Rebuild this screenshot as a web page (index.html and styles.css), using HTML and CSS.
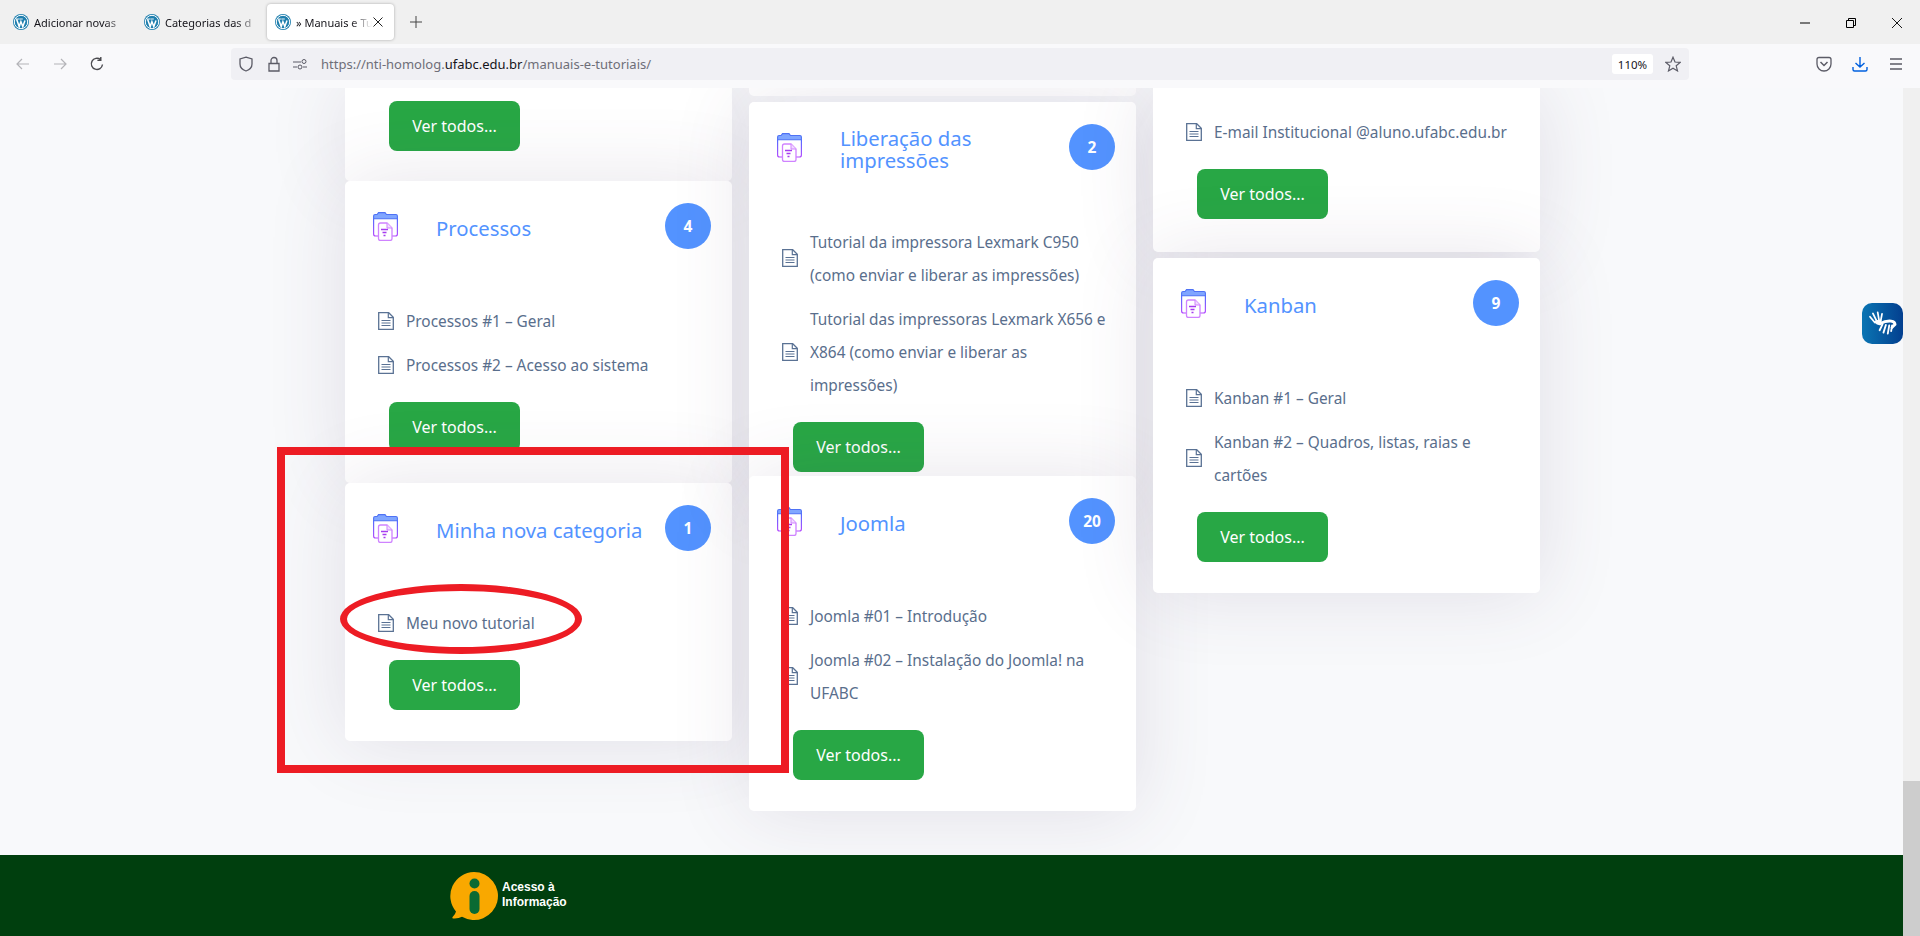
FILE: index.html
```html
<!DOCTYPE html>
<html lang="pt-BR">
<head>
<meta charset="utf-8">
<title>Manuais e Tutoriais</title>
<link rel="stylesheet" href="styles.css">
</head>
<body>
<svg class="defs" width="0" height="0" aria-hidden="true">
  <defs>
    <linearGradient id="fg" x1="0" y1="0" x2="0" y2="1">
      <stop offset="0" stop-color="#4f6dff"/>
      <stop offset="1" stop-color="#b44cff"/>
    </linearGradient>
    <symbol id="wp" viewBox="0 0 16 16">
      <circle cx="8" cy="8" r="8" fill="#1f7fae"/>
      <circle cx="8" cy="8" r="6.7" fill="none" stroke="#fff" stroke-width="1"/>
      <path d="M3.6 5.2 6.2 12.6 7.9 7.6 9.800 12.600 12 6.400" fill="none" stroke="#fff" stroke-width="1.500"/>
      <path d="M3 5h3.400M6.600 5h3.200" stroke="#fff" stroke-width=".9"/>
    </symbol>
    <symbol id="folder" viewBox="0 0 25 29">
      <path d="M.6 6.800V4q0-1.500 1.500-1.500h2L5.500.6h6.500l1.500 1.900h9.400q1.500 0 1.500 1.500v2.800z" fill="#80a6ff" stroke="#4f72f5" stroke-width="1.100"/>
      <path d="M.6 6.500v15.500q0 2 2 2h19.800q2 0 2-2V6.500" fill="none" stroke="url(#fg)" stroke-width="1.200"/>
      <path d="M5.500 13q0-2 2-2h6.500l5 5v10.500q0 2-2 2h-9.500q-2 0-2-2z" fill="#fff" stroke="#cf83ff" stroke-width="1.300"/>
      <path d="M14 11v5h5" fill="#f2dcff" stroke="#cf83ff"/>
      <path d="M8 17.500h7M9.500 20.500h4M10.500 23.500h2" stroke="#a63cf0" stroke-width="1.300"/>
    </symbol>
    <symbol id="doc" viewBox="0 0 16 18">
      <path d="M.7.700h10l4.600 4.600v12h-14.600z" fill="#fff" stroke="#5a7294" stroke-width="1.300"/>
      <path d="M10.300.700v5h5" fill="none" stroke="#5a7294" stroke-width="1.200"/>
      <path d="M3.500 8.500h9M3.500 11h9M3.500 13.500h9" stroke="#5a7294" stroke-width="1.200"/>
    </symbol>
  </defs>
</svg>

<div class="app">
  <header class="tabstrip">
    <div class="tab">
      <svg class="wp"><use href="#wp"/></svg>
      <span class="tab-label">Adicionar novas</span>
    </div>
    <div class="tab">
      <svg class="wp"><use href="#wp"/></svg>
      <span class="tab-label">Categorias das d</span>
    </div>
    <div class="tab tab-active">
      <svg class="wp"><use href="#wp"/></svg>
      <span class="tab-label">» Manuais e Tu</span>
      <svg class="tab-close" viewBox="0 0 10 10"><path d="M.5.500l9 9M9.500.500l-9 9" stroke="#222" fill="none"/></svg>
    </div>
    <svg class="tab-new" viewBox="0 0 12 12"><path d="M6 0v12M0 6h12" stroke="#444" stroke-width="1" fill="none"/></svg>
    <div class="winctl">
      <svg class="winbtn" viewBox="0 0 10 10"><path d="M0 5h10" stroke="#000" fill="none"/></svg>
      <svg class="winbtn" viewBox="0 0 10 10"><path d="M.5 2.500h7v7h-7zM2.500 2.500v-2h7v7h-2" stroke="#000" fill="none"/></svg>
      <svg class="winbtn" viewBox="0 0 10 10"><path d="M0 0l10 10M10 0l-10 10" stroke="#000" fill="none" stroke-width=".9"/></svg>
    </div>
  </header>

  <nav class="toolbar">
    <svg class="navbtn" viewBox="0 0 16 16"><path d="M14 8H2M7 3 2 8l5 5" stroke="#b4b4b8" stroke-width="1.200" fill="none"/></svg>
    <svg class="navbtn" viewBox="0 0 16 16"><path d="M2 8h12M9 3l5 5-5 5" stroke="#b4b4b8" stroke-width="1.200" fill="none"/></svg>
    <svg class="navbtn" viewBox="0 0 16 16"><path d="M13.500 8.500A5.600 5.600 0 1 1 11.500 3.500M11.800 1v3.400H8.400" stroke="#4a4a4f" stroke-width="1.400" fill="none"/></svg>
    <div class="urlbar">
      <svg class="urlicon" viewBox="0 0 16 16"><path d="M8 1.200 14 3v5c0 3.500-3 6-6 7-3-1-6-3.500-6-7V3z" stroke="#5b5b66" stroke-width="1.300" fill="none"/></svg>
      <svg class="urlicon" viewBox="0 0 16 16"><path d="M3 7.500h10V15H3zM5 7.500V4.500a3 3 0 0 1 6 0v3" stroke="#5b5b66" stroke-width="1.300" fill="none"/></svg>
      <svg class="urlicon" viewBox="0 0 16 16"><path d="M1 6h8M1 11h4M11 11h4" stroke="#5b5b66" stroke-width="1.200" fill="none"/><circle cx="12" cy="5.500" r="2" stroke="#5b5b66" fill="none"/><circle cx="8" cy="11" r="2" stroke="#5b5b66" fill="none"/></svg>
      <span class="url">https://nti-homolog.<b class="url-host">ufabc.edu.br</b>/manuais-e-tutoriais/</span>
      <span class="zoom-pill">110%</span>
      <svg class="star" viewBox="0 0 16 16"><path d="M8 1.200 10 6l5.200.4-4 3.400 1.300 5.100L8 12.200 3.500 14.900l1.300-5.100-4-3.400L6 6z" stroke="#5b5b66" stroke-width="1.200" fill="none"/></svg>
    </div>
    <div class="tools">
      <svg class="tool" viewBox="0 0 16 16"><path d="M1 3.500q0-2 2-2h10q2 0 2 2V8a7 7 0 0 1-14 0z" stroke="#5b5b66" stroke-width="1.300" fill="none"/><path d="M4.500 6 8 9.500 11.500 6" stroke="#5b5b66" stroke-width="1.500" fill="none"/></svg>
      <svg class="tool" viewBox="0 0 16 16"><path d="M8 1v10M3.500 7 8 11l4.500-4M1 11v2.500q0 1.500 1.500 1.500h11q1.500 0 1.500-1.500V11" stroke="#0060df" stroke-width="1.400" fill="none"/></svg>
      <svg class="tool" viewBox="0 0 16 16"><path d="M2 3h12M2 8h12M2 13h12" stroke="#5b5b66" stroke-width="1.300" fill="none"/></svg>
    </div>
  </nav>

  <div class="viewport">
    <main class="page">
      <div class="columns">
        <section class="col">
          <article class="card card-cut-a">
            <a class="btn">Ver todos...</a>
          </article>
          <article class="card">
            <div class="card-head">
              <svg class="folder"><use href="#folder"/></svg>
              <h2 class="card-title">Processos</h2>
              <span class="badge">4</span>
            </div>
            <ul class="list">
              <li class="item"><svg class="doc"><use href="#doc"/></svg><span>Processos #1 – Geral</span></li>
              <li class="item"><svg class="doc"><use href="#doc"/></svg><span>Processos #2 – Acesso ao sistema</span></li>
            </ul>
            <a class="btn">Ver todos...</a>
          </article>
          <article class="card">
            <div class="card-head">
              <svg class="folder"><use href="#folder"/></svg>
              <h2 class="card-title">Minha nova categoria</h2>
              <span class="badge">1</span>
            </div>
            <ul class="list">
              <li class="item"><svg class="doc"><use href="#doc"/></svg><span>Meu novo tutorial</span></li>
            </ul>
            <a class="btn">Ver todos...</a>
          </article>
        </section>

        <section class="col">
          <article class="card card-cut-b"></article>
          <article class="card card-under">
            <div class="card-head">
              <svg class="folder"><use href="#folder"/></svg>
              <h2 class="card-title">Liberação das impressões</h2>
              <span class="badge">2</span>
            </div>
            <ul class="list">
              <li class="item"><svg class="doc"><use href="#doc"/></svg><span>Tutorial da impressora Lexmark C950 (como enviar e liberar as impressões)</span></li>
              <li class="item"><svg class="doc"><use href="#doc"/></svg><span>Tutorial das impressoras Lexmark X656 e X864 (como enviar e liberar as impressões)</span></li>
            </ul>
            <a class="btn">Ver todos...</a>
          </article>
          <article class="card">
            <div class="card-head">
              <svg class="folder"><use href="#folder"/></svg>
              <h2 class="card-title">Joomla</h2>
              <span class="badge">20</span>
            </div>
            <ul class="list">
              <li class="item"><svg class="doc"><use href="#doc"/></svg><span>Joomla #01 – Introdução</span></li>
              <li class="item"><svg class="doc"><use href="#doc"/></svg><span>Joomla #02 – Instalação do Joomla! na UFABC</span></li>
            </ul>
            <a class="btn">Ver todos...</a>
          </article>
        </section>

        <section class="col">
          <article class="card card-cut-c">
            <ul class="list list-flush">
              <li class="item"><svg class="doc"><use href="#doc"/></svg><span>E-mail Institucional @aluno.ufabc.edu.br</span></li>
            </ul>
            <a class="btn">Ver todos...</a>
          </article>
          <article class="card">
            <div class="card-head">
              <svg class="folder"><use href="#folder"/></svg>
              <h2 class="card-title">Kanban</h2>
              <span class="badge">9</span>
            </div>
            <ul class="list">
              <li class="item"><svg class="doc"><use href="#doc"/></svg><span>Kanban #1 – Geral</span></li>
              <li class="item"><svg class="doc"><use href="#doc"/></svg><span>Kanban #2 – Quadros, listas, raias e cartões</span></li>
            </ul>
            <a class="btn">Ver todos...</a>
          </article>
        </section>
      </div>

      <footer class="footer">
        <div class="ai-logo">
          <svg class="ai-icon" viewBox="0 0 50 50">
            <path d="M25 1a24 24 0 1 1-12 44.800Q9 48 4 47.500q-1-.5-.4-1.500 3-3 3.400-5.500A24 24 0 0 1 25 1z" fill="#f9a800"/>
            <circle cx="25.500" cy="12.500" r="5" fill="#0a6a33"/>
            <rect x="20.500" y="20" width="10" height="23" rx="5" fill="#0a6a33"/>
          </svg>
          <span class="ai-text">Acesso à<br>Informação</span>
        </div>
      </footer>

      <div class="mark-rect"></div>
      <div class="mark-ellipse"></div>
    </main>
    <div class="scrollbar"><div class="thumb"></div></div>
    <div class="handtalk">
      <svg class="hands" viewBox="0 0 30 26">
        <path d="M2 6l5 6M5 2.500l4 8M10 1.500l1.500 8.500M14.500 3l-1.500 8" stroke="#fff" stroke-width="1.800" stroke-linecap="round" fill="none"/>
        <path d="M6 11q4-3 8-1l-1 5q-4 0-7-4z" fill="#fff"/>
        <path d="M13 13q5-3 11-2.500 4 .5 4 3.500l-3 3" stroke="#fff" stroke-width="3" stroke-linecap="round" fill="none"/>
        <path d="M15 14l-3 6M18.500 14.500l-2.500 8M22 15l-1.500 8.500M25 15l-1 6" stroke="#fff" stroke-width="1.900" stroke-linecap="round" fill="none"/>
      </svg>
    </div>
  </div>
</div>
</body>
</html>
```

FILE: styles.css
```css
* { box-sizing: border-box; }
html, body { margin: 0; height: 100%; overflow: hidden; }
body { font-family: "Noto Sans", "Open Sans", sans-serif; background: #f8f9fb; }
.defs { position: absolute; }
.app { display: flex; flex-direction: column; height: 936px; }

/* window chrome */
.tabstrip { height: 44px; flex: none; background: #f0f0f0; display: flex; align-items: flex-start; padding-top: 4px; }
.tab { width: 131px; height: 36px; display: flex; align-items: center; padding-left: 13px; gap: 5px; font-size: 11px; color: #15141a; white-space: nowrap; overflow: hidden; }
.tab-label { display: block; overflow: hidden; flex: 1; min-width: 0; -webkit-mask-image: linear-gradient(90deg, #000 72%, transparent 100%); mask-image: linear-gradient(90deg, #000 72%, transparent 100%); }
.tab-active { width: 127px; margin-left: 5px; padding-left: 8px; padding-right: 11px; background: #fff; border-radius: 4px; box-shadow: 0 0 3px rgba(0,0,0,.3); }
.wp { width: 16px; height: 16px; flex: none; }
.tab-close { width: 10px; height: 10px; flex: none; margin-left: -4px; }
.tab-new { width: 12px; height: 12px; margin: 12px 0 0 16px; flex: none; }
.winctl { margin-left: auto; display: flex; gap: 36px; padding: 14px 18px 0 0; }
.winbtn { width: 10px; height: 10px; display: block; }

.toolbar { height: 44px; flex: none; background: #f9f9fb; display: flex; align-items: center; padding: 0 16px 4px 15px; }
.navbtn { width: 16px; height: 16px; flex: none; margin-right: 21px; }
.urlbar { width: 1458px; height: 32px; margin-left: 105px; background: #f0f0f4; border-radius: 4px; display: flex; align-items: center; padding: 0 7px; }
.urlicon { width: 16px; height: 16px; flex: none; margin-right: 12px; }
.urlicon:nth-child(2) { margin-right: 10px; }
.url { font-size: 13px; color: #6e6e78; flex: 1; white-space: nowrap; margin-left: 1px; }
.url-host { font-weight: 400; color: #15141a; }
.zoom-pill { width: 41px; height: 20px; background: #fff; border-radius: 3px; font-size: 11.500px; color: #15141a; display: flex; align-items: center; justify-content: center; }
.star { width: 16px; height: 16px; margin: 0 1px 0 12px; flex: none; }
.tools { margin-left: auto; display: flex; gap: 20px; }
.tool { width: 16px; height: 16px; display: block; }

/* page */
.viewport { flex: 1; display: flex; min-height: 0; position: relative; }
.page { flex: 1; min-width: 0; display: flex; flex-direction: column; position: relative; overflow: hidden; }
.columns { flex: 1; min-height: 0; display: flex; gap: 17px; padding-left: 345px; align-items: flex-start; overflow: hidden; }
.col { width: 387px; flex: none; display: flex; flex-direction: column; }

.card { background: #fff; border-radius: 5px; padding: 22px 0 31px; box-shadow: 0 0 80px rgba(82,63,105,.14); position: relative; }
.card-cut-a { padding: 13px 0 30px; border-radius: 0 0 5px 5px; }
.card-cut-b { height: 8px; padding: 0; margin-bottom: 6px; border-radius: 0 0 5px 5px; }
.card-cut-c { padding: 27px 0 33px; margin-bottom: 6px; border-radius: 0 0 5px 5px; }
.card-under { margin-bottom: -27px; border-radius: 5px 5px 0 0; }

.card-head { display: flex; align-items: center; height: 46px; padding: 0 21px 0 28px; }
.folder { width: 25px; height: 29px; flex: none; margin-top: 1px; }
.card-title { flex: 1; min-width: 0; margin: 3px 0 0 38px; font-size: 20.300px; line-height: 22px; font-weight: 400; color: #5393ff; }
.badge { width: 46px; height: 46px; border-radius: 50%; background: #5393ff; color: #fff; font-size: 15.500px; font-weight: 700; display: flex; align-items: center; justify-content: center; flex: none; }

.list { list-style: none; margin: 55px 0 0; padding: 0 26px 10px 33px; }
.list-flush { margin-top: 0; }
.item { display: flex; align-items: center; gap: 12px; font-size: 15.400px; line-height: 33px; color: #596e8c; margin-bottom: 11px; }
.item span { margin: 1px 0 -1px; }
.doc { width: 16px; height: 18px; flex: none; }
.btn { display: flex; align-items: center; justify-content: center; width: 131px; height: 50px; margin-left: 44px; background: #28a745; color: #fff; border-radius: 8px; font-size: 16px; }

/* footer */
.footer { height: 81px; flex: none; background: #003f0e; padding-left: 449px; display: flex; align-items: center; }
.ai-logo { display: flex; align-items: center; gap: 3px; }
.ai-icon { width: 50px; height: 50px; display: block; }
.ai-text { font-family: "Liberation Sans", Arial, sans-serif; font-size: 12px; line-height: 15px; font-weight: 700; color: #fff; margin-top: -2px; }

/* annotations drawn over the page */
.mark-rect { position: absolute; left: 277px; top: 359px; width: 512px; height: 326px; border: 8px solid #ed1c24; }
.mark-ellipse { position: absolute; left: 340px; top: 496px; width: 242px; height: 70px; border: 7px solid #ed1c24; border-radius: 50%; }

.scrollbar { width: 17px; flex: none; background: #f0f0f0; display: flex; flex-direction: column; justify-content: flex-end; }
.thumb { height: 155px; background: #cdcdcd; }
.handtalk { position: absolute; left: 1862px; top: 215px; width: 41px; height: 41px; border-radius: 10px; background: linear-gradient(90deg, #0a75b3, #033f8f); display: flex; align-items: center; justify-content: center; }
.hands { width: 29px; height: 25px; display: block; }
```
